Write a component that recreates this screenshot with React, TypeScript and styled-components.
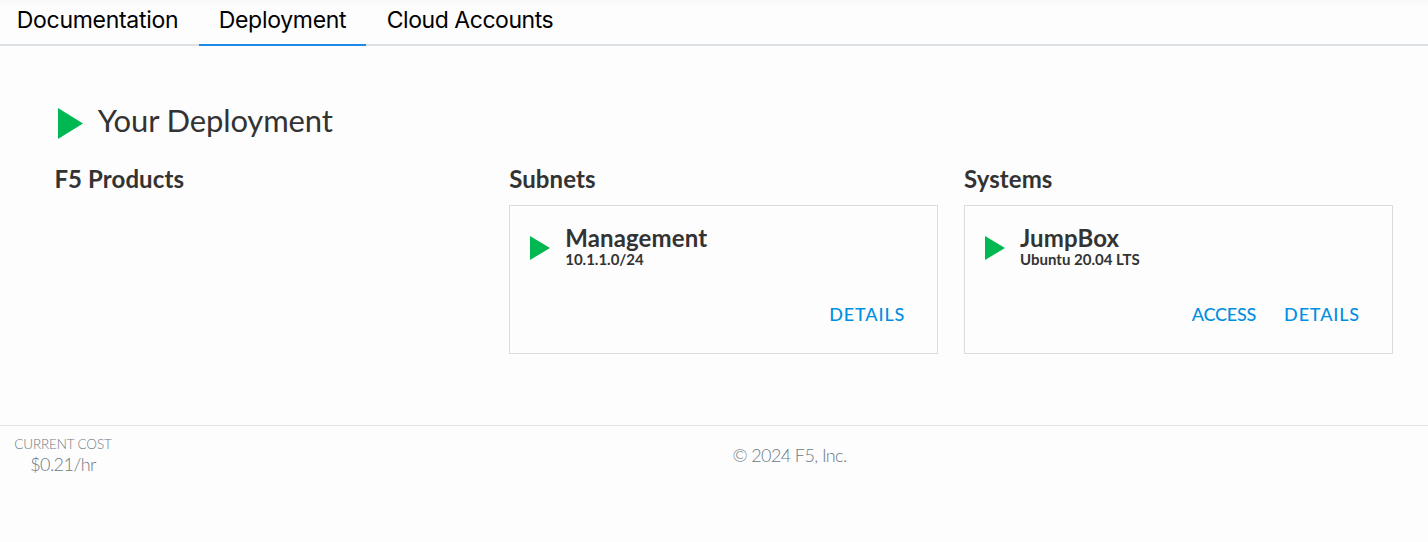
import React from "react";
import styled, { createGlobalStyle } from "styled-components";

const Global = createGlobalStyle`
  * { box-sizing: border-box; }
  body { margin: 0; background: #fdfdfd; color: #333; font-family: Lato, sans-serif; }
`;
const Page = styled.div`
  min-height: 542px;
`;
const Tabs = styled.nav`
  display: flex;
  height: 46px;
  border-bottom: 2px solid #dce1e6;
  background: linear-gradient(#f8f8f8, #fdfdfd 8px);
`;
const Tab = styled.a<{ $active?: boolean; $width: number; $spacing: number }>`
  width: ${(p) => p.$width}px;
  height: 46px;
  padding-top: 4px;
  text-align: center;
  white-space: nowrap;
  font: 400 23px/32px Inter, sans-serif;
  letter-spacing: ${(p) => p.$spacing}px;
  color: #000;
  border-bottom: 2px solid ${(p) => (p.$active ? "#1e88e5" : "transparent")};
  &:first-child { padding-right: 4px; }
`;
const Main = styled.main`
  height: 379px;
  padding: 54px 35px 0 54.4px;
`;
const Title = styled.h1`
  display: flex;
  align-items: center;
  gap: 15px;
  height: 40px;
  margin: 0 0 21px;
  padding-left: 3.4px;
  font-size: 31px;
  letter-spacing: -0.13px;
  font-weight: 400;
  line-height: 40px;
`;
const Columns = styled.div`
  display: grid;
  grid-template-columns: repeat(3, 429px);
  column-gap: 25.8px;
`;
const Heading = styled.h2`
  margin: 0 0 8px;
  font-size: 24px;
  letter-spacing: 0.1px;
  line-height: 36px;
  font-weight: 700;
`;
const Card = styled.article`
  display: flex;
  flex-direction: column;
  height: 149px;
  padding: 18px 32px 0 20px;
  border: 1px solid #dcdcdc;
`;
const CardTop = styled.div`
  display: flex;
  gap: 15px;
`;
const Arrow = styled.svg`
  flex: none;
  display: block;
  fill: #00b851;
`;
const TitleArrow = styled(Arrow)`
  margin-top: 6px;
`;
const CardArrow = styled(Arrow)`
  margin-top: 12px;
`;
const Name = styled.div`
  font-size: 24px;
  letter-spacing: 0.14px;
  font-weight: 700;
  line-height: 28px;
`;
const Sub = styled.div`
  font-size: 15px;
  font-weight: 700;
  line-height: 14px;
`;
const Actions = styled.div`
  display: flex;
  justify-content: flex-end;
  gap: 28px;
  margin-top: 36px;
`;
const Action = styled.a<{ $spacing: number }>`
  font-size: 18px;
  line-height: 24px;
  font-weight: 500;
  letter-spacing: ${(p) => p.$spacing}px;
  color: #008fe2;
`;
const Footer = styled.footer`
  display: grid;
  grid-template-columns: 140px 1fr 0;
  height: 117px;
  border-top: 1px solid #e6e6e6;
  color: #6c7a85;
`;
const Cost = styled.div`
  width: 126px;
  padding-top: 9px;
  text-align: center;
  font-size: 13.5px;
  font-weight: 300;
  letter-spacing: -0.15px;
  line-height: 18px;
`;
const Price = styled.div`
  font-size: 18px;
  line-height: 23px;
  letter-spacing: -0.55px;
`;
const Copyright = styled.div`
  padding: 17px 0 0 11px;
  text-align: center;
  font-size: 18px;
  line-height: 24px;
  font-weight: 300;
  letter-spacing: -0.6px;
`;

function ResourceCard({ name, sub, access }: { name: string; sub: string; access?: boolean }) {
  return (
    <Card>
      <CardTop>
        <CardArrow width="20" height="24" viewBox="0 0 20 24"><path d="M0 0 20 12 0 24Z" /></CardArrow>
        <div>
          <Name>{name}</Name>
          <Sub>{sub}</Sub>
        </div>
      </CardTop>
      <Actions>
        {access && <Action $spacing={-0.22}>ACCESS</Action>}
        <Action $spacing={0.85}>DETAILS</Action>
      </Actions>
    </Card>
  );
}

export default function App() {
  return (
    <Page>
      <Global />
      <Tabs>
        <Tab $width={199} $spacing={-0.3}>Documentation</Tab>
        <Tab $active $width={167} $spacing={-0.3}>Deployment</Tab>
        <Tab $width={208} $spacing={-0.45}>Cloud Accounts</Tab>
      </Tabs>
      <Main>
        <Title>
          <TitleArrow width="25" height="31" viewBox="0 0 25 31"><path d="M0 0 25 15.5 0 31Z" /></TitleArrow>
          Your Deployment
        </Title>
        <Columns>
          <section><Heading>F5 Products</Heading></section>
          <section><Heading>Subnets</Heading><ResourceCard name="Management" sub="10.1.1.0/24" /></section>
          <section><Heading>Systems</Heading><ResourceCard name="JumpBox" sub="Ubuntu 20.04 LTS" access /></section>
        </Columns>
      </Main>
      <Footer>
        <Cost>CURRENT COST<Price>$0.21/hr</Price></Cost>
        <Copyright>© 2024 F5, Inc.</Copyright>
      </Footer>
    </Page>
  );
}
